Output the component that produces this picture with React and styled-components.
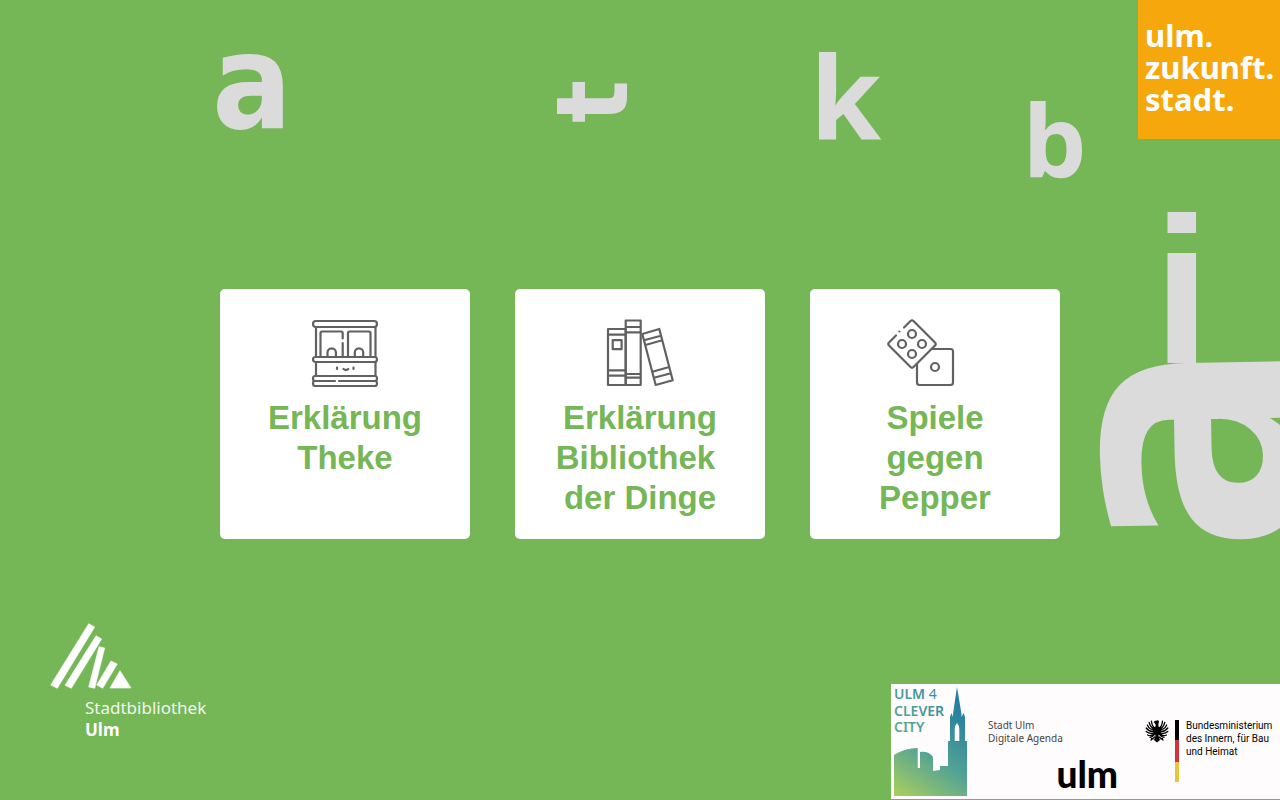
import React from "react";
import styled, { createGlobalStyle } from "styled-components";

const GlobalStyle = createGlobalStyle`
  *, *::before, *::after { box-sizing: border-box; }
  body { margin: 0; background: #75b657; }
`;

const Page = styled.div`
  position: relative;
  display: flex;
  flex-direction: column;
  min-height: 100vh;
  overflow: hidden;
  background: #75b657;
  font-family: "Noto Sans", "Open Sans", sans-serif;
`;

const Backdrop = styled.svg`
  position: absolute;
  inset: 0;
  width: 100%;
  height: 100%;
  fill: #dbdbdb;
  font-family: "Noto Sans", "Open Sans", sans-serif;
  font-weight: 700;
  pointer-events: none;
`;

const Header = styled.header`
  position: relative;
  display: flex;
  justify-content: flex-end;
`;

const CampaignLogo = styled.a`
  width: 142px;
  height: 139px;
  padding: 19px 0 0 7px;
  background: #f6a70b;
  color: #fff;
  font-size: 31px;
  font-weight: 700;
  line-height: 32px;
  text-decoration: none;
  white-space: nowrap;
`;

const Line = styled.span`
  display: block;
`;

const Main = styled.main`
  position: relative;
  flex: 1;
  display: grid;
  grid-template-columns: repeat(auto-fit, 250px);
  justify-content: center;
  align-content: start;
  gap: 45px;
  padding: 150px 40px 60px;
`;

const Card = styled.button`
  display: flex;
  flex-direction: column;
  align-items: center;
  gap: 11px;
  height: 250px;
  padding: 30px 20px 0;
  border: 0;
  border-radius: 5px;
  background: #fff;
  color: #75b657;
  font-family: "Liberation Sans", Arial, sans-serif;
  font-size: 33px;
  font-weight: 700;
  line-height: 40px;
  cursor: pointer;
`;

const CardIcon = styled.svg`
  flex: none;
  width: ${({ $width = 68 }) => $width}px;
  height: 68px;
  fill: none;
  stroke: #616161;
  stroke-width: 2.2;
  stroke-linecap: round;
  stroke-linejoin: round;
`;

const Footer = styled.footer`
  position: relative;
  display: flex;
  flex-wrap: wrap;
  justify-content: space-between;
  align-items: flex-end;
`;

const LibraryLogo = styled.a`
  display: flex;
  flex-direction: column;
  padding: 0 0 59px 50px;
  color: #fff;
  text-decoration: none;
`;

const LibraryMark = styled.svg`
  width: 82px;
  height: 66px;
  fill: #fff;
`;

const LibraryName = styled.span`
  padding: 8px 0 0 35px;
  font-size: 17px;
  line-height: 22px;
  color: #f0f6ec;
`;

const LibraryCity = styled.strong`
  padding-left: 35px;
  font-size: 17px;
  line-height: 22px;
`;

const Partners = styled.div`
  display: flex;
  height: 115px;
  margin-bottom: 1px;
  padding: 3px 8px 3px 3px;
  background: #fefcfd;
  color: #000;
`;

const Skyline = styled.svg`
  width: 73px;
  height: 109px;
  overflow: visible;
  font-size: 14px;
  font-weight: 600;
`;

const Agenda = styled.div`
  display: flex;
  flex-direction: column;
  width: 130px;
  margin-left: 21px;
  padding-top: 32px;
  font-size: 10px;
  line-height: 13px;
  color: #444;
`;

const CityName = styled.strong`
  align-self: flex-end;
  margin-top: 9px;
  color: #000;
  font-family: Lato, "Noto Sans", sans-serif;
  font-size: 37px;
  font-weight: 900;
  line-height: 40px;
`;

const Ministry = styled.div`
  display: flex;
  align-items: flex-start;
  margin-left: 27px;
  padding-top: 32px;
`;

const Eagle = styled.svg`
  width: 24px;
  height: 24px;
`;

const FlagBar = styled.div`
  width: 4px;
  height: 62px;
  margin: 1px 7px 0 6px;
  background: linear-gradient(#000 0 33%, #d0343f 33% 67%, #e8c63c 67%);
`;

const MinistryName = styled.div`
  width: 86px;
  font-family: Roboto, sans-serif;
  font-size: 10px;
  line-height: 13px;
  white-space: nowrap;
`;

function CounterIcon() {
  return (
    <CardIcon viewBox="0 0 68 68" aria-hidden="true">
      <rect x="2" y="2" width="64" height="6" rx="3" />
      <path d="M5 8V38M64.5 8V38M5 43V57M64.5 43V57" />
      <path d="M9.5 37V14Q9.5 12.5 11 12.5H30Q31.7 12.5 31.7 14V19.5M31.7 24V37" />
      <path d="M37 37V14Q37 12.5 38.5 12.5H58Q59.5 12.5 59.5 14V37" />
      <path d="M16.5 37V33.5a4.2 4.2 0 0 1 8.4 0V37M43.8 37V33.5a4.2 4.2 0 0 1 8.4 0V37" />
      <rect x="2" y="38" width="64" height="5" rx="2.5" />
      <path d="M26 48.5V50M42.5 48.5V50M32.5 50Q35 52 37.3 50" />
      <path d="M24 62H4Q2 62 2 59.5T4 57H64Q66 57 66 59.5T64 62H28" />
      <path d="M4 62Q2 62 2 64.5T4 67H64Q66 67 66 64.5T64 62" />
    </CardIcon>
  );
}

function BooksIcon() {
  return (
    <CardIcon viewBox="0 0 68 68" aria-hidden="true">
      <path d="M2 10H19.7V66H2ZM2 15.7H19.7M2 51.3H19.7M2 56.7H19.7" />
      <path d="M6.7 21.2H15.6V30.2H6.7Z" />
      <path d="M19.7 1.5H34.7V66H19.7ZM19.7 8H34.7M19.7 13.3H34.7M19.7 55H34.7M19.7 58.7H34.7" />
      <path d="M36.3 15 53.3 10 66.7 61.3 49.7 66ZM38 21.3 55 16.7M39.5 26 56.2 21.3M46.3 52.7 63.3 48M48 58.7 65 54.3" />
    </CardIcon>
  );
}

function DiceIcon() {
  return (
    <CardIcon $width={98} viewBox="0 0 98 68" aria-hidden="true">
      <path d="M18 8.5 24.5 2Q26 .5 27.5 2L49 23.5Q50.5 25 49 26.5L27.5 48Q26 49.5 24.5 48L3 26.5Q1.5 25 3 23.5L10 16.5" />
      <path d="M13.3 12.5h.1" />
      <circle cx="26" cy="15" r="4" />
      <circle cx="16" cy="25" r="4" />
      <circle cx="36" cy="25" r="4" />
      <circle cx="26" cy="35" r="4" />
      <path d="M46.5 30H64.5Q67 30 67 32.5V63.5Q67 66 64.5 66H33.5Q31 66 31 63.5V45" />
      <circle cx="49" cy="48" r="4" />
    </CardIcon>
  );
}

const cards = [
  { Icon: CounterIcon, lines: ["Erklärung", "Theke"] },
  { Icon: BooksIcon, lines: ["Erklärung", "Bibliothek\u00a0", "der Dinge"] },
  { Icon: DiceIcon, lines: ["Spiele", "gegen", "Pepper"] },
];

export default function App() {
  return (
    <Page>
      <GlobalStyle />
      <Backdrop viewBox="0 0 1280 800" preserveAspectRatio="xMaxYMin slice" aria-hidden="true">
        <g fontFamily="DejaVu Sans Condensed">
          <text x="212" y="128" fontSize="132">a</text>
          <text transform="translate(627 123) rotate(-90)" fontSize="100">t</text>
          <text transform="translate(1301 552) rotate(-91)" fontSize="356">a</text>
        </g>
        <text x="810" y="139" fontSize="115">k</text>
        <text x="1023" y="178" fontSize="101">b</text>
        <text x="1153" y="363" fontSize="208" fontFamily="Liberation Sans">i</text>
      </Backdrop>

      <Header>
        <CampaignLogo href="#zukunftsstadt">
          <Line>ulm.</Line>
          <Line>zukunft.</Line>
          <Line>stadt.</Line>
        </CampaignLogo>
      </Header>

      <Main>
        {cards.map(({ Icon, lines }) => (
          <Card type="button" key={lines.join(" ")}>
            <Icon />
            <span>
              {lines.map((line) => (
                <Line key={line}>{line}</Line>
              ))}
            </span>
          </Card>
        ))}
      </Main>

      <Footer>
        <LibraryLogo href="#stadtbibliothek">
          <LibraryMark viewBox="0 0 82 66" aria-hidden="true">
            <path d="M38.7.7 44.7 4 7.3 65.3.7 62ZM46 12.7 51.7 16 21.3 65.3 15 62.3ZM49 23.7 54.7 25 44.7 65.3 38.7 64ZM61 38 67.3 41 52.7 65.3 46.7 62ZM70 47.7 81 65H60Z" stroke="#fff" strokeWidth=".6" strokeLinejoin="round" />
          </LibraryMark>
          <LibraryName>Stadtbibliothek</LibraryName>
          <LibraryCity>Ulm</LibraryCity>
        </LibraryLogo>

        <Partners>
          <Skyline viewBox="0 0 73 109">
            <defs>
              <linearGradient id="city" gradientUnits="userSpaceOnUse" x1="66" y1="20" x2="4" y2="112">
                <stop offset="0" stopColor="#237f9f" />
                <stop offset=".5" stopColor="#52a294" />
                <stop offset="1" stopColor="#acd05c" />
              </linearGradient>
              <linearGradient id="name" gradientUnits="userSpaceOnUse" x1="52" y1="0" x2="0" y2="46">
                <stop offset="0" stopColor="#2f87a3" />
                <stop offset="1" stopColor="#5fab93" />
              </linearGradient>
            </defs>
            <g fill="url(#name)">
              <text x="0" y="12">ULM <tspan fontWeight="400">4</tspan></text>
              <text x="0" y="29">CLEVER</text>
              <text x="0" y="45">CITY</text>
            </g>
            <path
              fill="url(#city)"
              fillRule="evenodd"
              d="M0 68Q11 61 23.7 61V81H26V65Q35 64 39 70V84L46 83V79H54V54H56V30L57.5 26 59 30V27L63 0 67.5 27V30L69.5 26 71 30V54H73V109H0ZM60.7 54H65.3V42Q65 38 63 36Q61 38 60.7 42Z"
            />
          </Skyline>

          <Agenda>
            <span>Stadt Ulm</span>
            <span>Digitale Agenda</span>
            <CityName>ulm</CityName>
          </Agenda>

          <Ministry>
            <Eagle viewBox="0 0 24 24" aria-hidden="true">
              <path d="M12 1.5Q13.8.6 14 3L13.4 5V8H10.6V5.5L9.5 3.7 8.6 3.4Q9.5 1.3 12 1.5Z" />
              <path d="M10.2 7.5H13.8L14.6 12 13.5 17 15 21 12 23.5 9 21 10.5 17 9.4 12Z" />
              <g fill="none" stroke="#000" strokeWidth="1.3" strokeLinecap="round">
                <path d="M10.5 9Q7 8 6.5 2.2M10 10Q5.5 9 4.2 3.5M10 11Q4.5 11 2.3 6M10 12Q4.5 13.5 1.2 9M10 13Q5.5 16 1.2 12.5M10 14Q6 18 2.6 16M10 15Q8 18 5 18.3M9.8 18 6 21M8 20 6.5 19.5" />
                <path d="M13.5 9Q17 8 17.5 2.2M14 10Q18.5 9 19.8 3.5M14 11Q19.5 11 21.7 6M14 12Q19.5 13.5 22.8 9M14 13Q18.5 16 22.8 12.5M14 14Q18 18 21.4 16M14 15Q16 18 19 18.3M14.2 18 18 21M16 20 17.5 19.5" />
              </g>
            </Eagle>
            <FlagBar />
            <MinistryName>
              <Line>Bundesministerium</Line>
              <Line>des Innern, für Bau</Line>
              <Line>und Heimat</Line>
            </MinistryName>
          </Ministry>
        </Partners>
      </Footer>
    </Page>
  );
}
